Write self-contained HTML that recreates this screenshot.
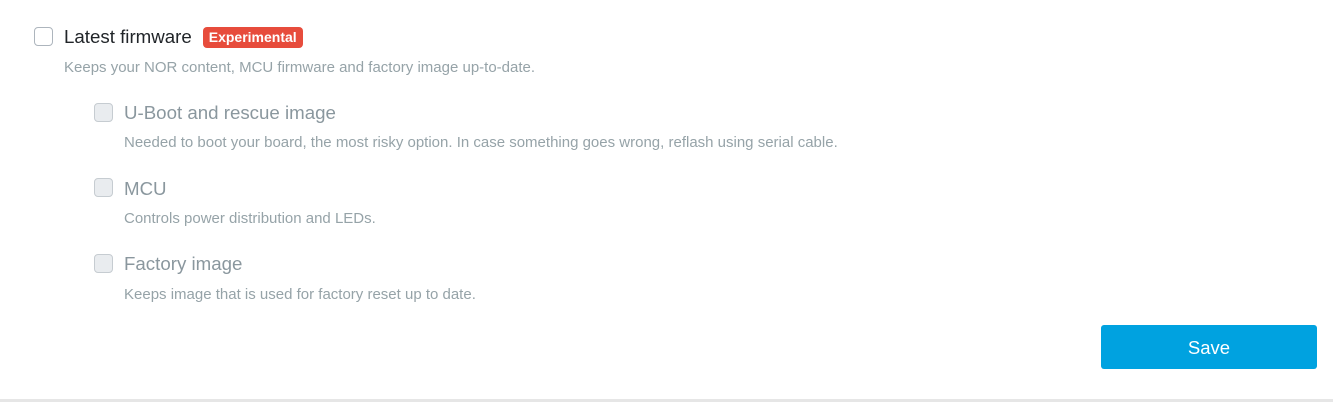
<!DOCTYPE html>
<html><head><style>
body{margin:0;width:1333px;height:402px;background:#fff;font-family:"Liberation Sans",sans-serif;position:relative;overflow:hidden}
.cb{position:absolute;width:19px;height:19px;border:1px solid #adb5bd;border-radius:4px;box-sizing:border-box;background:#fff}
.cb.d{background:#e9ecef;border-color:#c6ccd1}
.l{position:absolute;font-size:18.7px;color:#212529;white-space:nowrap}
.l.d{color:#8a979e}
.h{position:absolute;font-size:15px;color:#96a3a8;white-space:nowrap}
.badge{display:inline-block;background:#e74c3c;color:#fff;font-weight:bold;font-size:14px;padding:2px 6px 3px;border-radius:4px;margin-left:11px;vertical-align:1px}
.btn{position:absolute;left:1101px;top:325px;width:216px;height:44px;background:#00a2e0;border-radius:3px;color:#fff;font-size:18.5px;text-align:center;line-height:45px}
.line{position:absolute;left:0;top:399px;width:1333px;height:3px;background:#e6e6e6}
</style></head><body>
<div class="cb" style="left:34px;top:27px"></div>
<div class="l" style="left:64px;top:26px">Latest firmware<span class="badge">Experimental</span></div>
<div class="h" style="left:64px;top:59px">Keeps your NOR content, MCU firmware and factory image up-to-date.</div>
<div class="cb d" style="left:94px;top:103px"></div>
<div class="l d" style="left:124px;top:102px">U-Boot and rescue image</div>
<div class="h" style="left:124px;top:134px">Needed to boot your board, the most risky option. In case something goes wrong, reflash using serial cable.</div>
<div class="cb d" style="left:94px;top:178px"></div>
<div class="l d" style="left:124px;top:178px">MCU</div>
<div class="h" style="left:124px;top:210px">Controls power distribution and LEDs.</div>
<div class="cb d" style="left:94px;top:254px"></div>
<div class="l d" style="left:124px;top:253px">Factory image</div>
<div class="h" style="left:124px;top:286px">Keeps image that is used for factory reset up to date.</div>
<div class="btn">Save</div>
<div class="line"></div>
</body></html>
